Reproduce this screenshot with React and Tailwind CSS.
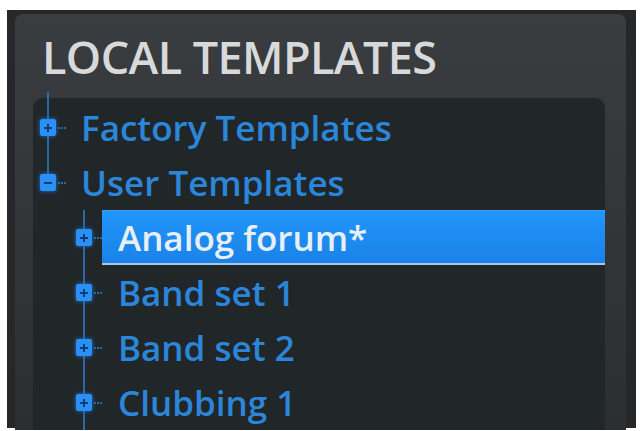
import React from "react";

const FONT = { fontFamily: '"Open Sans", "DejaVu Sans", sans-serif' };

function Box({ minus }) {
  return (
    <div className="relative z-10 flex h-[17px] w-[17px] items-center justify-center rounded-[2px] bg-[#2a90f6] shadow-[0_0_4px_#1f78d0]">
      <div className="absolute h-[2px] w-[8px] bg-[#0f3d78]" />
      {!minus && <div className="absolute h-[8px] w-[2px] bg-[#0f3d78]" />}
    </div>
  );
}

function Row({ level, label, minus, selected, lineTop, lineBottom, lineAbove }) {
  const indent = level === 0 ? "pl-[7px]" : "pl-[43px]";
  return (
    <div className={`flex h-[55px] items-center ${indent}`}>
      <div className="relative flex h-full w-[16px] items-center justify-center">
        {lineTop && (
          <div
            className={`absolute left-[7px] w-[2px] bg-[#2a68a6] ${lineAbove ? "top-[-8px]" : "top-0"} bottom-1/2`}
          />
        )}
        {lineBottom && <div className="absolute left-[7px] top-1/2 bottom-0 w-[2px] bg-[#2a68a6]" />}
        <Box minus={minus} />
      </div>
      <div className="ml-[2px] w-[8px] border-t-2 border-dotted border-[#2a68a6]" />
      {selected ? (
        <div className="flex h-[55px] flex-1 items-center border-t border-b-2 border-t-[#3f9cf5] border-b-[#a9c8e4] bg-gradient-to-b from-[#2196fa] to-[#1a82e8] pl-[16px] text-[#e9eff6]">
          {label}
        </div>
      ) : (
        <div className={`${level === 0 ? "ml-[15px]" : "ml-[16px]"} text-[#2b86d9]`}>{label}</div>
      )}
    </div>
  );
}

export default function App() {
  return (
    <div className="h-[431px] w-[640px] overflow-hidden bg-white pl-[7px] pt-[10px]" style={FONT}>
      <div className="flex h-[418px] w-[629px] flex-col bg-[#252729] pl-[8px] pr-[10px] pt-[4px]">
        <div className="flex flex-1 flex-col rounded-t-[8px] bg-gradient-to-b from-[#3a3d40] to-[#2c2e30] pl-[18px] pr-[21px] pt-[21px]">
          <div className="h-[44px] pl-[9px] text-[45px] font-semibold leading-[44px] tracking-[-0.6px] text-[#d8d9da]">
            LOCAL TEMPLATES
          </div>
          <div className="mt-[19px] flex-1 rounded-t-[10px] bg-[#212629] pt-[2px] text-[35px] font-semibold leading-[55px]">
            <Row level={0} label="Factory Templates" lineTop lineAbove lineBottom />
            <Row level={0} label="User Templates" minus lineTop />
            <Row level={1} label="Analog forum*" selected lineTop lineBottom />
            <Row level={1} label="Band set 1" lineTop lineBottom />
            <Row level={1} label="Band set 2" lineTop lineBottom />
            <Row level={1} label="Clubbing 1" lineTop lineBottom />
          </div>
        </div>
      </div>
    </div>
  );
}
